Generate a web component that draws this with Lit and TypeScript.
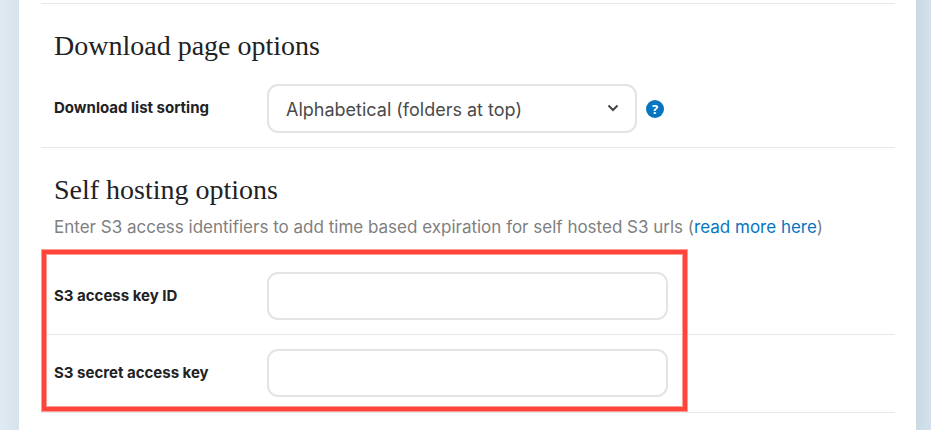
import { LitElement, html, css } from "lit";
import { customElement } from "lit/decorators.js";

@customElement("app-root")
export class AppRoot extends LitElement {
  static styles = css`
    :host {
      display: block;
      box-sizing: border-box;
      min-height: 100vh;
      padding: 0 15px 0 19px;
      font-family: Inter, "Liberation Sans", sans-serif;
      color: #212224;
      background:
        linear-gradient(to right, #e0eaf3, #d6e4eb) left / 19px 100% no-repeat,
        linear-gradient(to right, #c9dae3, #d4e1ec) right / 15px 100% no-repeat,
        #dbe7ef;
    }
    .card {
      box-sizing: border-box;
      min-height: 100vh;
      padding: 3px 21px 0 22px;
      background: #fff;
    }
    .section {
      border-top: 1px solid #e6e9eb;
      padding-top: 26px;
    }
    h2 {
      margin: 0;
      padding-left: 13px;
      font: 400 28px/32px "Liberation Serif", serif;
    }
    .intro {
      margin: 9px 0 10px;
      padding-left: 13px;
      font-size: 17px;
      line-height: 24px;
      color: #808080;
    }
    .intro a {
      color: #0675c1;
      text-decoration: none;
    }
    .row {
      display: grid;
      grid-template-columns: 213px minmax(0, 1fr);
      align-items: center;
      padding: 14px 0 15px 13px;
    }
    .sorting {
      padding: 22px 0 14px 13px;
    }
    .fields {
      position: relative;
    }
    .fields .row {
      border-bottom: 1px solid #e1e9ef;
    }
    .fields .first {
      padding: 23px 0 14px 13px;
    }
    .label {
      font-size: 15px;
      line-height: 20px;
      font-weight: 700;
      padding-bottom: 1px;
    }
    .control {
      display: flex;
      align-items: center;
      gap: 9px;
    }
    .picker {
      position: relative;
      width: 370px;
    }
    select,
    input {
      display: block;
      box-sizing: border-box;
      width: 100%;
      height: 48px;
      margin: 0;
      padding: 0 17px;
      border: 2px solid #e4e4e4;
      border-radius: 11px;
      background: #fff;
      font: 400 18px/24px Inter, "Liberation Sans", sans-serif;
      color: #4a4a4a;
    }
    select {
      height: 49px;
      padding-top: 2px;
      appearance: none;
    }
    input {
      max-width: 401px;
    }
    .chevron {
      position: absolute;
      right: 18px;
      top: 20px;
      pointer-events: none;
    }
    .help {
      width: 18px;
      height: 18px;
      padding: 0;
      border: 0;
      border-radius: 50%;
      background: #0675c1;
      color: #fff;
      font: 700 13px/18px "Open Sans", sans-serif;
    }
    .highlight {
      position: absolute;
      top: 1px;
      bottom: 2px;
      left: 1px;
      width: 637px;
      border: 4px solid #ff453a;
      box-shadow: 0 0 0 1px #ff9c96, inset 0 0 0 1px #ff9c96;
      pointer-events: none;
    }
  `;

  render() {
    return html`
      <main class="card">
        <section class="section">
          <h2>Download page options</h2>
          <div class="row sorting">
            <label class="label" for="sorting">Download list sorting</label>
            <div class="control">
              <div class="picker">
                <select id="sorting">
                  <option>Alphabetical (folders at top)</option>
                </select>
                <svg class="chevron" width="12" height="8" viewBox="0 0 12 8" aria-hidden="true">
                  <path d="M1.500 1.500 6 6 10.500 1.500" fill="none" stroke="#444" stroke-width="2" />
                </svg>
              </div>
              <button class="help" type="button">?</button>
            </div>
          </div>
        </section>
        <section class="section">
          <h2>Self hosting options</h2>
          <p class="intro">
            Enter S3 access identifiers to add time based expiration for self hosted S3 urls
            (<a href="#">read more here</a>)
          </p>
          <div class="fields">
            <div class="row first">
              <label class="label" for="key-id">S3 access key ID</label>
              <input id="key-id" type="text" />
            </div>
            <div class="row">
              <label class="label" for="secret">S3 secret access key</label>
              <input id="secret" type="text" />
            </div>
            <div class="highlight"></div>
          </div>
        </section>
      </main>
    `;
  }
}
